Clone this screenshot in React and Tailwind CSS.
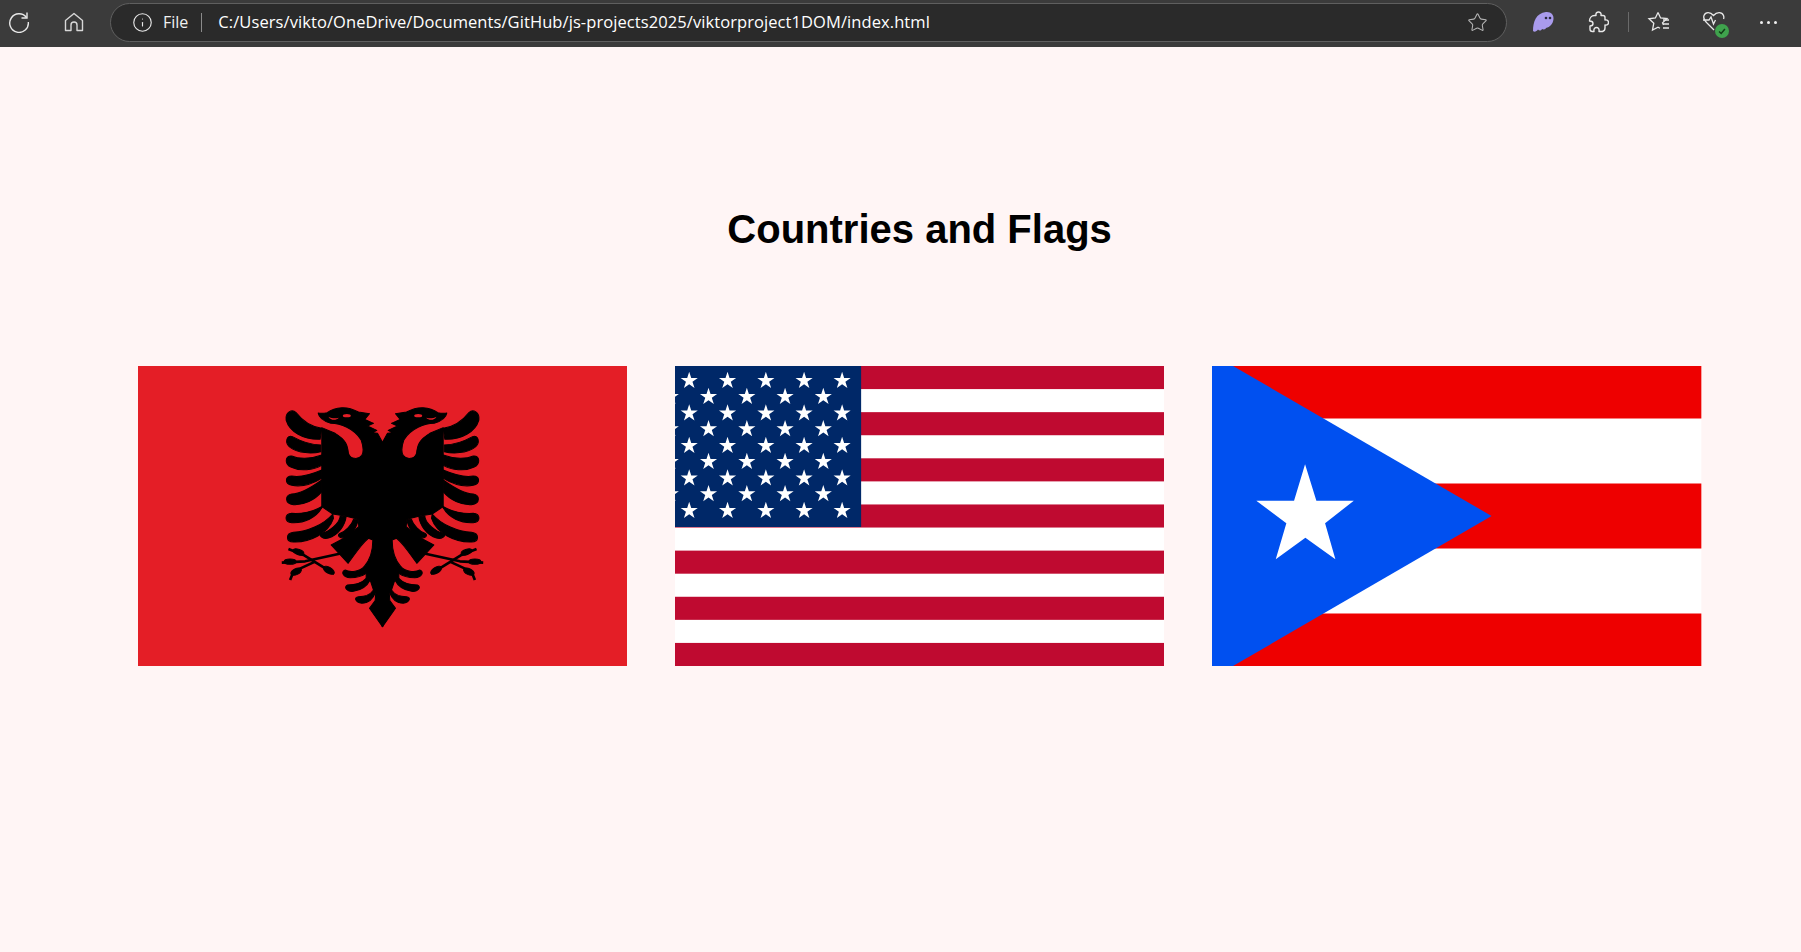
import { Info, Star } from "lucide-react"

function starPoints(cx, cy, r) {
  const pts = []
  for (let i = 0; i < 10; i++) {
    const rad = i % 2 === 0 ? r : r * 0.382
    const a = -Math.PI / 2 + (i * Math.PI) / 5
    pts.push(`${(cx + rad * Math.cos(a)).toFixed(2)},${(cy + rad * Math.sin(a)).toFixed(2)}`)
  }
  return pts.join(" ")
}

function EagleHalf() {
  return (
    <g fill="#000" stroke="#000" strokeWidth="3" strokeLinejoin="round">
      {/* head, neck and body */}
      <path d="M369,157 L367,157 L352,130 L338,128 L350,121 L322,108 L340,100 L314,88 L328,71 L295,66 C280,58 262,52 245,53 C228,54 212,60 201,68 C190,70 182,70 174,69 C176,82 192,94 212,100 C240,100 282,115 303,150 C310,170 311,185 305,196 C295,210 270,208 265,190 C262,165 258,150 225,130 L185,113 L185,350 L218,372 L255,378 L294,388 L296,410 L250,445 L213,465 L264,520 C280,500 300,465 325,445 L338,450 C338,490 325,515 312,530 L318,550 L318,565 L330,570 L340,600 L347,605 L345,632 L328,655 L367,710 L369,708 Z" />
      {/* wing feathers */}
      <path d="M185,115 C150,110 125,90 108,68 C95,55 75,68 78,90 C88,125 130,150 180,148 Z" />
      <path d="M182,165 C150,165 115,150 97,140 C80,133 72,158 90,172 C115,190 155,192 182,185 Z" />
      <path d="M185,195 C150,208 115,207 95,198 C75,195 72,222 92,231 C120,245 160,240 185,226 Z" />
      <path d="M185,240 C150,255 115,262 95,258 C75,258 72,281 95,286 C125,292 160,280 185,265 Z" />
      <path d="M185,270 C150,295 120,312 95,312 C75,315 72,341 100,344 C130,346 165,330 185,305 Z" />
      <path d="M188,348 C160,365 125,372 95,370 C72,372 72,397 95,398 C130,400 170,385 188,348 Z" />
      <path d="M218,372 C190,405 140,425 100,427 C76,430 76,456 100,456 C150,458 205,430 220,385 Z" />
      {/* lower feathers */}
      <path d="M240,378 C240,400 205,425 185,430 C172,436 190,449 205,444 C235,435 255,405 258,380 Z" />
      <path d="M280,388 C275,405 255,425 240,430 C228,436 240,446 250,443 C275,436 292,410 294,388 Z" />
      {/* tail */}
      <path d="M312,530 C300,545 270,548 255,540 C240,545 250,563 270,563 C290,563 310,556 318,550 Z" />
      <path d="M318,565 C305,580 280,585 262,585 C250,590 258,606 280,604 C300,601 320,590 330,570 Z" />
      <path d="M340,600 C330,615 315,620 295,620 C280,622 285,636 305,640 C325,640 340,625 347,605 Z" />
      {/* talons */}
      <path d="M245,490 L135,514 L65,518" fill="none" strokeWidth="8" />
      <path d="M85,477 L130,495 L222,552" fill="none" strokeWidth="8" />
      <path d="M90,570 L100,545 L165,515" fill="none" strokeWidth="8" />
      <ellipse cx="90" cy="515" rx="18" ry="8" />
      <ellipse cx="115" cy="486" rx="17" ry="8" transform="rotate(20 115 486)" />
      <ellipse cx="206" cy="541" rx="18" ry="9" transform="rotate(30 206 541)" />
      <ellipse cx="108" cy="545" rx="17" ry="9" transform="rotate(-25 108 545)" />
      {/* eye and beak slit */}
      <ellipse cx="260" cy="77" rx="12" ry="5" fill="#e41e26" stroke="none" />
      <path d="M205,80 C215,86 228,86 236,83 C228,92 212,92 205,80 Z" fill="#e41e26" stroke="none" />
    </g>
  )
}

function Albania() {
  return (
    <svg viewBox="0 0 489 300" preserveAspectRatio="none" className="flex-1 min-w-0 h-[300px]">
      <rect width="489" height="300" fill="#e41e26" />
      <g transform="translate(122 24) scale(0.3333)">
        <EagleHalf />
        <g transform="translate(734 0) scale(-1 1)">
          <EagleHalf />
        </g>
      </g>
    </svg>
  )
}

function Usa() {
  const rowsA = [14.7, 47.3, 79.7, 112.3, 144.7]
  const colsA = [14.2, 52.5, 90.8, 129, 167]
  const rowsB = [30.7, 63, 95.7, 128]
  const colsB = [-4.7, 33.5, 71.8, 110, 148.2]
  const h = 300 / 13
  return (
    <svg viewBox="0 0 489 300" preserveAspectRatio="none" className="flex-1 min-w-0 h-[300px]">
      <rect width="489" height="300" fill="#fff" />
      {[0, 2, 4, 6, 8, 10, 12].map((i) => (
        <rect key={i} y={i * h} width="489" height={h} fill="#bf0a30" />
      ))}
      <rect width="186" height="161" fill="#002868" />
      <svg width="186" height="161">
        {rowsA.map((y) => colsA.map((x) => <polygon key={`${x}-${y}`} points={starPoints(x, y, 9)} fill="#fff" />))}
        {rowsB.map((y) => colsB.map((x) => <polygon key={`${x}-${y}`} points={starPoints(x, y, 9)} fill="#fff" />))}
      </svg>
    </svg>
  )
}

function PuertoRico() {
  return (
    <svg viewBox="0 0 489 300" preserveAspectRatio="none" className="flex-1 min-w-0 h-[300px]">
      <rect width="489" height="300" fill="#fff" />
      <rect width="489" height="52.5" fill="#ee0000" />
      <rect y="117.5" width="489" height="65" fill="#ee0000" />
      <rect y="247.5" width="489" height="52.5" fill="#ee0000" />
      <polygon points="0,0 21,0 279.4,150 21,300 0,300" fill="#0050f0" />
      <polygon
        points="93,98.3 104.3,134.7 141.7,134.7 113,157.3 123.3,193.3 93.3,171.7 63.7,193.3 74.3,157.3 44.3,134.7 82,134.7"
        fill="#fff"
      />
    </svg>
  )
}

function Refresh() {
  return (
    <svg viewBox="0 0 22 22" className="w-[22px] h-[22px]" fill="none" stroke="#e8e8e8" strokeWidth="1.4">
      <path d="M18.500 6.500 A9.300 9.300 0 1 0 20.300 11" />
      <path d="M19 1.500 V7 H13.500" />
    </svg>
  )
}

function HomeIcon() {
  return (
    <svg viewBox="0 0 22 22" className="w-[22px] h-[22px]" fill="none" stroke="#d8d8d8" strokeWidth="1.4" strokeLinejoin="round">
      <path d="M11 2.500 L19.500 9.500 V19.500 H14 V14 A3 3 0 0 0 8 14 V19.500 H2.500 V9.500 Z" />
    </svg>
  )
}

function Ghost() {
  return (
    <svg viewBox="0 0 24 24" className="w-[24px] h-[24px]">
      <path
        d="M2 21 C2 12 5 3 15 2 C20 1.500 23 5 22.500 9 C22 14 19 17 15 18 C14 20 12 19.500 11 19 C10 21 8 21 7 19.500 C5.500 21.500 3.500 22.500 2 21 Z"
        fill="#a99bec"
      />
      <circle cx="15" cy="8" r="1.300" fill="#2b2b3f" />
      <circle cx="19" cy="8" r="1.300" fill="#2b2b3f" />
    </svg>
  )
}

function Extensions() {
  return (
    <svg viewBox="0 0 22 22" className="w-[22px] h-[22px]" fill="none" stroke="#e8e8e8" strokeWidth="1.4" strokeLinejoin="round">
      <path d="M7.500 4.500 H9 C8.500 1.500 10.500 1 11.500 1 C12.500 1 14.500 1.500 14 4.500 H16 C17 4.500 18 5.500 18 6.500 V9 C21 8.500 21.500 10.500 21.500 11.500 C21.500 13 20.500 14.500 18 14 V17 C18 19 17 20 15.500 20.500 H12 C12.500 17.500 11 16.500 9.500 16.500 C8 16.500 6.500 17.500 7 20.500 H5.500 C4 20.500 3 19.500 3 18 V15 C5 15 6 14 6 12.500 C6 11 5 10 2.500 10 C2.500 7 4.500 4.500 7.500 4.500 Z" />
    </svg>
  )
}

function Favorites() {
  return (
    <svg viewBox="0 0 24 24" className="w-[24px] h-[24px]" fill="none" stroke="#e8e8e8" strokeWidth="1.3">
      <path d="M11 2.500 L13.600 8 L20 8.600 L15.500 12.800 L16.500 15 M11 2.500 L8.400 8 L2 8.800 L6.800 13.200 L5.500 20 L11 17.200 L13 18.300" />
      <path d="M16 10 H22 M16 14 H22 M16 18 H22" />
    </svg>
  )
}

function Health() {
  return (
    <div className="relative w-[24px] h-[24px]">
      <svg viewBox="0 0 24 24" className="w-[24px] h-[24px]" fill="none" stroke="#e8e8e8" strokeWidth="1.3">
        <path d="M5 13 C2 10 1 8 2 5.500 C3.500 2 8 1.500 11.500 5.500 C15 1.500 20 2 21.500 5.500 C22 7 22 8 21.500 9" />
        <path d="M1 10 H7 L9 7 L11.500 14 L13.500 10" />
        <path d="M5 13 L12 20" />
      </svg>
      <div className="absolute right-[-3px] bottom-[-4px] w-[14px] h-[14px] rounded-full bg-[#3fa34d] flex items-center justify-center">
        <svg viewBox="0 0 12 12" className="w-[10px] h-[10px]" fill="none" stroke="#123d18" strokeWidth="1.8">
          <path d="M2.500 6.500 L5 9 L9.500 3.500" />
        </svg>
      </div>
    </div>
  )
}

export default function App() {
  return (
    <div className="min-h-[952px] bg-[#fff5f5]">
      {/* browser bar */}
      <div className="h-[47px] pb-[3px] bg-[#3b3b3b] flex items-center text-[#f0f0f0] font-['Open_Sans',sans-serif]">
        <div className="ml-[8px]">
          <Refresh />
        </div>
        <div className="ml-[33px]">
          <HomeIcon />
        </div>

        <div className="ml-[25px] w-[1397px] h-[39px] rounded-full bg-[#2a2a2a] border border-[#5f5f5f] flex items-center">
          <Info size={21} strokeWidth={1.3} className="ml-[21px] text-[#e8e8e8]" />
          <span className="ml-[10px] text-[16px] leading-none">File</span>
          <div className="ml-[13px] w-px h-[19px] bg-[#8a8a8a]" />
          <span className="ml-[16px] text-[16.5px] leading-none text-white tracking-[0.08px]">
            C:/Users/vikto/OneDrive/Documents/GitHub/js-projects2025/viktorproject1DOM/index.html
          </span>
          <Star size={21} strokeWidth={1.2} className="ml-auto mr-[18px] text-[#b5b5b5]" />
        </div>

        <div className="ml-[24px]">
          <Ghost />
        </div>
        <div className="ml-[32px]">
          <Extensions />
        </div>
        <div className="ml-[19px] w-px h-[20px] bg-[#6a6a6a]" />
        <div className="ml-[18px]">
          <Favorites />
        </div>
        <div className="ml-[31px]">
          <Health />
        </div>
        <div className="ml-[34px] flex gap-[4px]">
          <div className="w-[3px] h-[3px] rounded-full bg-[#f0f0f0]" />
          <div className="w-[3px] h-[3px] rounded-full bg-[#f0f0f0]" />
          <div className="w-[3px] h-[3px] rounded-full bg-[#f0f0f0]" />
        </div>
      </div>

      {/* page content */}
      <div className="pl-[137.6px] pr-[99.4px]">
        <h1 className="pt-[159px] text-center text-[40px] leading-[46px] font-bold text-black font-['Liberation_Sans',sans-serif]">
          Countries and Flags
        </h1>
        <div className="mt-[114px] flex gap-[48px]">
          <Albania />
          <Usa />
          <PuertoRico />
        </div>
      </div>
    </div>
  )
}
